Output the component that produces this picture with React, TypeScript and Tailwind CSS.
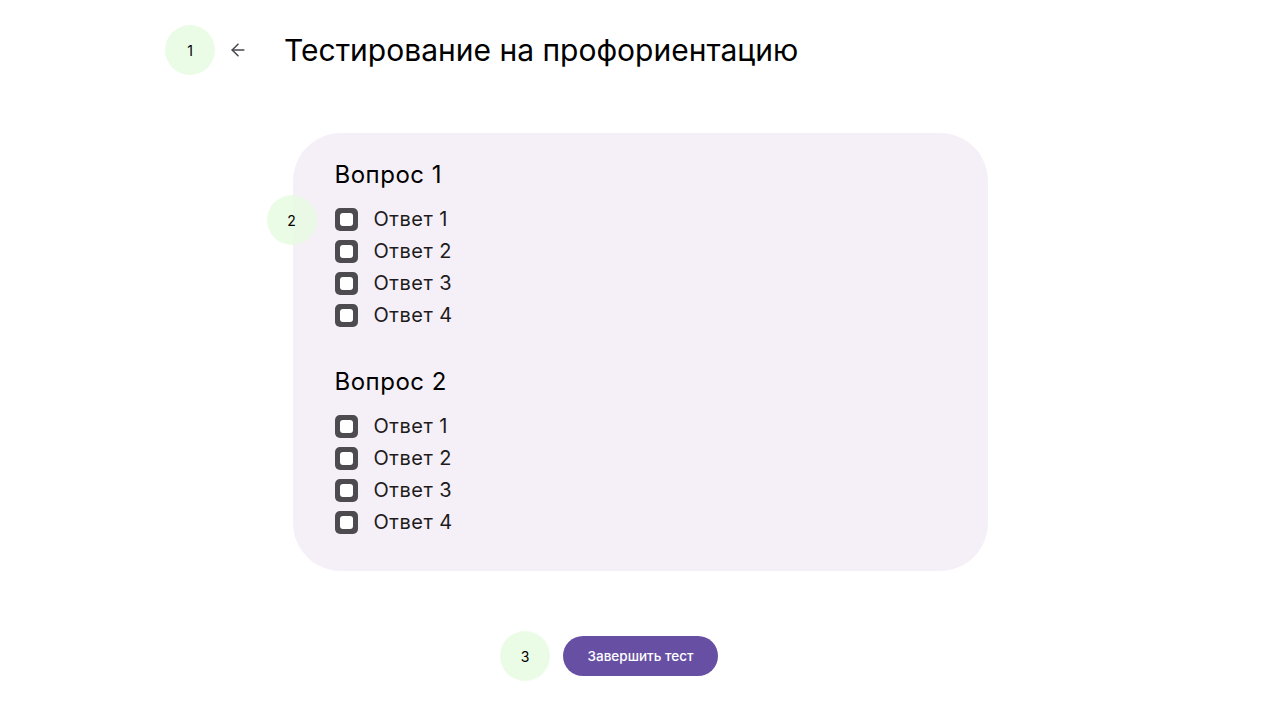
import React from 'react'
import { ArrowLeft } from 'lucide-react'

const questions = [
    { title: 'Вопрос 1', answers: ['Ответ 1', 'Ответ 2', 'Ответ 3', 'Ответ 4'] },
    { title: 'Вопрос 2', answers: ['Ответ 1', 'Ответ 2', 'Ответ 3', 'Ответ 4'] },
]

function Marker({ n }: { n: number }) {
    return (
        <div className="w-[50px] h-[50px] rounded-full bg-[#e6fbe0]/80 flex items-center justify-center text-[14px] text-black shrink-0">
            {n}
        </div>
    )
}

function Box() {
    return (
        <div className="w-[23px] h-[23px] rounded-[5px] bg-[#4d4b4f] flex items-center justify-center shrink-0">
            <div className="w-[13px] h-[13px] rounded-[3px] bg-white" />
        </div>
    )
}

export default function App() {
    return (
        <div className="w-[1280px] h-[720px] bg-white text-[#1d1b20] overflow-hidden" style={{ fontFamily: 'Inter, "Noto Sans", sans-serif' }}>
            <header className="flex items-center pl-[165px] pt-[25px] h-[75px]">
                <Marker n={1} />
                <button className="ml-[11px] w-[24px] h-[24px] flex items-center justify-center text-[#49454f]">
                    <ArrowLeft size={20} strokeWidth={1.8} />
                </button>
                <h1 className="ml-[34px] text-[30px] leading-[36px] text-black">Тестирование на профориентацию</h1>
            </header>

            <div className="flex justify-center mt-[58px]">
                <div className="relative w-[695px] h-[438px] rounded-[48px] bg-[#f5f0f7] pl-[42px] pt-[26px]">
                    <div className="absolute left-[-26px] top-[62px]">
                        <Marker n={2} />
                    </div>
                    {questions.map((q, i) => (
                        <div key={i} className={i > 0 ? 'mt-[35px]' : ''}>
                            <h2 className="text-[24px] leading-[32px] tracking-[0.5px] text-black">{q.title}</h2>
                            <ul className="mt-[12px]">
                                {q.answers.map((a) => (
                                    <li key={a} className="flex items-center h-[32px]">
                                        <Box />
                                        <span className="ml-[16px] text-[20px] leading-[28px] tracking-[0.5px] text-[#1d1b20]">{a}</span>
                                    </li>
                                ))}
                            </ul>
                        </div>
                    ))}
                </div>
            </div>

            <div className="flex justify-center items-center mt-[60px]">
                <div className="flex items-center ml-[-62px]">
                    <Marker n={3} />
                    <button className="ml-[13px] h-[40px] w-[155px] rounded-full bg-[#6750a4] text-white text-[13.5px] font-medium flex items-center justify-center">
                        Завершить тест
                    </button>
                </div>
            </div>
        </div>
    )
}
